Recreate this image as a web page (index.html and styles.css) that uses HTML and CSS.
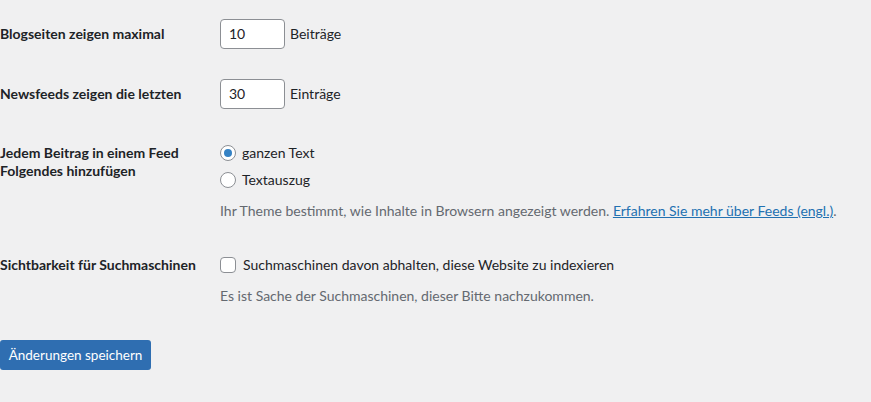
FILE: index.html
```html
<!DOCTYPE html>
<html lang="de">
<head>
<meta charset="utf-8">
<title>Lesen</title>
<link rel="stylesheet" href="styles.css">
</head>
<body>
<form class="settings">
  <div class="row row-first">
    <div class="th">Blogseiten zeigen maximal</div>
    <div class="td"><span class="num-input">10</span><span class="unit">Beiträge</span></div>
  </div>
  <div class="row">
    <div class="th">Newsfeeds zeigen die letzten</div>
    <div class="td"><span class="num-input">30</span><span class="unit">Einträge</span></div>
  </div>
  <div class="row row-feed">
    <div class="th th-wide">Jedem Beitrag in einem Feed Folgendes hinzufügen</div>
    <div class="td td-feed">
      <div class="choice choice-first"><span class="radio checked"></span><span>ganzen Text</span></div>
      <div class="choice choice-second"><span class="radio"></span><span>Textauszug</span></div>
      <p class="desc desc-feed">Ihr Theme bestimmt, wie Inhalte in Browsern angezeigt werden. <a href="#" class="link">Erfahren Sie mehr über Feeds (engl.)</a>.</p>
    </div>
  </div>
  <div class="row row-search">
    <div class="th th-wide">Sichtbarkeit für Suchmaschinen</div>
    <div class="td td-search">
      <div class="choice"><span class="checkbox"></span><span>Suchmaschinen davon abhalten, diese Website zu indexieren</span></div>
      <p class="desc desc-search">Es ist Sache der Suchmaschinen, dieser Bitte nachzukommen.</p>
    </div>
  </div>
  <div class="submit"><span class="button">Änderungen speichern</span></div>
</form>
</body>
</html>
```
FILE: styles.css
```css
html, body {
  margin: 0;
  padding: 0;
  background: #f0f0f1;
}
body {
  font-family: Lato, "Liberation Sans", sans-serif;
  font-size: 14px;
  color: #1d2327;
}
.settings {
  padding-top: 4px;
}
.row {
  display: flex;
  align-items: flex-start;
}
.th {
  width: 200px;
  padding: 0 10px 0 0;
  font-weight: 700;
  line-height: 18px;
  flex: none;
}
.td {
  padding: 15px 10px;
  line-height: 20px;
}
.row-first .th, .row .th {
  padding-top: 21px;
}
.row-feed .th, .row-search .th {
  padding-top: 20px;
}
.num-input {
  display: inline-flex;
  align-items: center;
  box-sizing: border-box;
  width: 65px;
  height: 30px;
  padding: 0 8px;
  background: #fff;
  border: 1px solid #8c8f94;
  border-radius: 4px;
  vertical-align: middle;
}
.unit {
  margin-left: 5px;
  vertical-align: middle;
}
.td-feed {
  padding-top: 15px;
}
.choice {
  display: flex;
  align-items: center;
  height: 20px;
}
.choice-first {
  margin-top: 4px;
}
.choice-second {
  margin-top: 7px;
}
.radio, .checkbox {
  box-sizing: border-box;
  width: 16px;
  height: 16px;
  border: 1px solid #8c8f94;
  background: #fff;
  margin-right: 6px;
  flex: none;
  display: flex;
  align-items: center;
  justify-content: center;
}
.radio {
  border-radius: 50%;
}
.radio.checked::before {
  content: "";
  width: 8px;
  height: 8px;
  border-radius: 50%;
  background: #3582c4;
}
.checkbox {
  border-radius: 4px;
  margin-right: 7px;
}
.desc {
  margin: 0;
  color: #646970;
}
.desc-feed {
  margin-top: 11px;
}
.link {
  color: #2271b1;
  text-decoration: underline;
}
.td-search {
  padding-top: 15px;
}
.td-search .choice {
  height: 28px;
}
.desc-search {
  margin-top: 7px;
}
.submit {
  display: flex;
  padding-top: 19px;
}
.button {
  display: flex;
  align-items: center;
  justify-content: center;
  box-sizing: border-box;
  height: 30px;
  width: 151px;
  padding: 0;
  white-space: nowrap;
  background: #2f6eb1;
  color: #fff;
  font-size: 13.5px;
  border-radius: 3px;
}
```
